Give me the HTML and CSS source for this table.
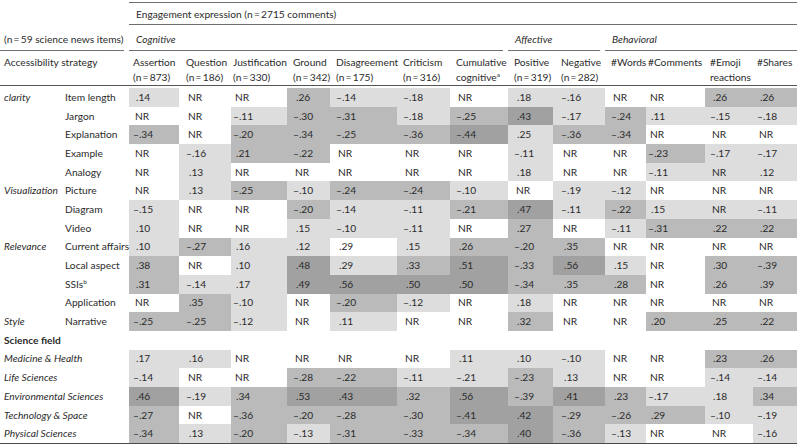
FILE: index.html
```html
<!DOCTYPE html>
<html lang="en">
<head>
<meta charset="utf-8">
<title>Engagement expression table</title>
<link rel="stylesheet" href="styles.css">
</head>
<body>
<table class="tbl">
  <colgroup>
    <col class="w61"><col class="w68">
    <col class="w50"><col class="w52"><col class="w56"><col class="w43"><col class="w67"><col class="w53"><col class="w58">
    <col class="w45"><col class="w52">
    <col class="w41"><col class="w59"><col class="w48"><col class="w44">
  </colgroup>
  <thead>
    <tr class="r1">
      <th colspan="2"></th>
      <th colspan="13" class="eng">Engagement expression (n&thinsp;=&thinsp;2715 comments)</th>
    </tr>
    <tr class="r2">
      <th colspan="2" class="grp"><div class="rule plain">(n&thinsp;=&thinsp;59 science news items)</div></th>
      <th colspan="7" class="grp"><div class="rule">Cognitive</div></th>
      <th colspan="2" class="grp"><div class="rule">Affective</div></th>
      <th colspan="4" class="grp"><div class="rule last">Behavioral</div></th>
    </tr>
    <tr class="r3">
      <th colspan="2" class="lead">Accessibility strategy</th>
      <th>Assertion<br>(n&thinsp;=&thinsp;873)</th>
      <th>Question<br>(n&thinsp;=&thinsp;186)</th>
      <th>Justification<br>(n&thinsp;=&thinsp;330)</th>
      <th>Ground<br>(n&thinsp;=&thinsp;342)</th>
      <th>Disagreement<br>(n&thinsp;=&thinsp;175)</th>
      <th>Criticism<br>(n&thinsp;=&thinsp;316)</th>
      <th>Cumulative<br>cognitive<sup>a</sup></th>
      <th>Positive<br>(n&thinsp;=&thinsp;319)</th>
      <th>Negative<br>(n&thinsp;=&thinsp;282)</th>
      <th>#Words</th>
      <th>#Comments</th>
      <th>#Emoji<br>reactions</th>
      <th>#Shares</th>
    </tr>
  </thead>
  <tbody>
    <tr class="sp"><td colspan="15"></td></tr>
    <tr class="row">
      <td class="cat">clarity</td><td class="lab">Item length</td>
      <td class="l p">.14</td><td class="nr">NR</td><td class="nr">NR</td><td class="m p">.26</td><td class="l">–.14</td><td class="l">–.18</td><td class="nr">NR</td>
      <td class="l p">.18</td><td class="l">–.16</td>
      <td class="nr">NR</td><td class="nr">NR</td><td class="m p">.26</td><td class="m p">.26</td>
    </tr>
    <tr class="row">
      <td class="cat"></td><td class="lab">Jargon</td>
      <td class="nr">NR</td><td class="nr">NR</td><td class="l">–.11</td><td class="m">–.30</td><td class="m">–.31</td><td class="l">–.18</td><td class="m">–.25</td>
      <td class="d p">.43</td><td class="l">–.17</td>
      <td class="m">–.24</td><td class="l p">.11</td><td class="l">–.15</td><td class="l">–.18</td>
    </tr>
    <tr class="row">
      <td class="cat"></td><td class="lab">Explanation</td>
      <td class="m">–.34</td><td class="nr">NR</td><td class="m">–.20</td><td class="m">–.34</td><td class="m">–.25</td><td class="m">–.36</td><td class="d">–.44</td>
      <td class="l p">.25</td><td class="m">–.36</td>
      <td class="m">–.34</td><td class="nr">NR</td><td class="nr">NR</td><td class="nr">NR</td>
    </tr>
    <tr class="row">
      <td class="cat"></td><td class="lab">Example</td>
      <td class="nr">NR</td><td class="l">–.16</td><td class="m p">.21</td><td class="m">–.22</td><td class="nr">NR</td><td class="nr">NR</td><td class="nr">NR</td>
      <td class="l">–.11</td><td class="nr">NR</td>
      <td class="nr">NR</td><td class="m">–.23</td><td class="l">–.17</td><td class="l">–.17</td>
    </tr>
    <tr class="row">
      <td class="cat"></td><td class="lab">Analogy</td>
      <td class="nr">NR</td><td class="l p">.13</td><td class="nr">NR</td><td class="nr">NR</td><td class="nr">NR</td><td class="nr">NR</td><td class="nr">NR</td>
      <td class="l p">.18</td><td class="nr">NR</td>
      <td class="nr">NR</td><td class="l">–.11</td><td class="l nr">NR</td><td class="l p">.12</td>
    </tr>
    <tr class="row">
      <td class="cat">Visualization</td><td class="lab">Picture</td>
      <td class="nr">NR</td><td class="l p">.13</td><td class="m">–.25</td><td class="l">–.10</td><td class="m">–.24</td><td class="m">–.24</td><td class="l">–.10</td>
      <td class="nr">NR</td><td class="l">–.19</td>
      <td class="l">–.12</td><td class="nr">NR</td><td class="nr">NR</td><td class="nr">NR</td>
    </tr>
    <tr class="row">
      <td class="cat"></td><td class="lab">Diagram</td>
      <td class="l">–.15</td><td class="nr">NR</td><td class="nr">NR</td><td class="m">–.20</td><td class="l">–.14</td><td class="l">–.11</td><td class="m">–.21</td>
      <td class="d p">.47</td><td class="l">–.11</td>
      <td class="m">–.22</td><td class="l p">.15</td><td class="l nr">NR</td><td class="l">–.11</td>
    </tr>
    <tr class="row">
      <td class="cat"></td><td class="lab">Video</td>
      <td class="l p">.10</td><td class="nr">NR</td><td class="nr">NR</td><td class="l p">.15</td><td class="l">–.10</td><td class="l">–.11</td><td class="nr">NR</td>
      <td class="m p">.27</td><td class="nr">NR</td>
      <td class="l">–.11</td><td class="m">–.31</td><td class="m p">.22</td><td class="m p">.22</td>
    </tr>
    <tr class="row">
      <td class="cat">Relevance</td><td class="lab">Current affairs</td>
      <td class="l p">.10</td><td class="m">–.27</td><td class="l p">.16</td><td class="l p">.12</td><td class="p">.29</td><td class="l p">.15</td><td class="m p">.26</td>
      <td class="m">–.20</td><td class="m p">.35</td>
      <td class="nr">NR</td><td class="nr">NR</td><td class="nr">NR</td><td class="nr">NR</td>
    </tr>
    <tr class="row">
      <td class="cat"></td><td class="lab">Local aspect</td>
      <td class="m p">.38</td><td class="nr">NR</td><td class="l p">.10</td><td class="d p">.48</td><td class="l p">.29</td><td class="m p">.33</td><td class="d p">.51</td>
      <td class="m">–.33</td><td class="d p">.56</td>
      <td class="l p">.15</td><td class="nr">NR</td><td class="m p">.30</td><td class="m">–.39</td>
    </tr>
    <tr class="row">
      <td class="cat"></td><td class="lab">SSIs<sup>b</sup></td>
      <td class="m p">.31</td><td class="l">–.14</td><td class="l p">.17</td><td class="d p">.49</td><td class="d p">.56</td><td class="d p">.50</td><td class="d p">.50</td>
      <td class="m">–.34</td><td class="m p">.35</td>
      <td class="m p">.28</td><td class="nr">NR</td><td class="m p">.26</td><td class="m p">.39</td>
    </tr>
    <tr class="row">
      <td class="cat"></td><td class="lab">Application</td>
      <td class="nr">NR</td><td class="m p">.35</td><td class="l">–.10</td><td class="nr">NR</td><td class="m">–.20</td><td class="l">–.12</td><td class="nr">NR</td>
      <td class="l p">.18</td><td class="nr">NR</td>
      <td class="nr">NR</td><td class="nr">NR</td><td class="nr">NR</td><td class="nr">NR</td>
    </tr>
    <tr class="row">
      <td class="cat">Style</td><td class="lab">Narrative</td>
      <td class="m">–.25</td><td class="m">–.25</td><td class="l">–.12</td><td class="nr">NR</td><td class="l p">.11</td><td class="nr">NR</td><td class="nr">NR</td>
      <td class="m p">.32</td><td class="nr">NR</td>
      <td class="nr">NR</td><td class="m p">.20</td><td class="m p">.25</td><td class="m p">.22</td>
    </tr>
    <tr class="row">
      <td colspan="15" class="section">Science field</td>
    </tr>
    <tr class="row">
      <td colspan="2" class="field">Medicine &amp; Health</td>
      <td class="l p">.17</td><td class="l p">.16</td><td class="nr">NR</td><td class="nr">NR</td><td class="nr">NR</td><td class="nr">NR</td><td class="l p">.11</td>
      <td class="l p">.10</td><td class="l">–.10</td>
      <td class="nr">NR</td><td class="nr">NR</td><td class="m p">.23</td><td class="m p">.26</td>
    </tr>
    <tr class="row">
      <td colspan="2" class="field">Life Sciences</td>
      <td class="l">–.14</td><td class="nr">NR</td><td class="nr">NR</td><td class="m">–.28</td><td class="m">–.22</td><td class="l">–.11</td><td class="l">–.21</td>
      <td class="m">–.23</td><td class="l p">.13</td>
      <td class="nr">NR</td><td class="nr">NR</td><td class="l">–.14</td><td class="l">–.14</td>
    </tr>
    <tr class="row">
      <td colspan="2" class="field">Environmental Sciences</td>
      <td class="d p">.46</td><td class="l">–.19</td><td class="m p">.34</td><td class="d p">.53</td><td class="d p">.43</td><td class="m p">.32</td><td class="d p">.56</td>
      <td class="m">–.39</td><td class="d p">.41</td>
      <td class="m p">.23</td><td class="l">–.17</td><td class="l p">.18</td><td class="m p">.34</td>
    </tr>
    <tr class="row">
      <td colspan="2" class="field">Technology &amp; Space</td>
      <td class="m">–.27</td><td class="nr">NR</td><td class="m">–.36</td><td class="m">–.20</td><td class="m">–.28</td><td class="m">–.30</td><td class="d">–.41</td>
      <td class="d p">.42</td><td class="m">–.29</td>
      <td class="m">–.26</td><td class="m p">.29</td><td class="l">–.10</td><td class="l">–.19</td>
    </tr>
    <tr class="row last">
      <td colspan="2" class="field">Physical Sciences</td>
      <td class="m">–.34</td><td class="l p">.13</td><td class="m">–.20</td><td class="l">–.13</td><td class="m">–.31</td><td class="m">–.33</td><td class="m">–.34</td>
      <td class="d p">.40</td><td class="m">–.36</td>
      <td class="l">–.13</td><td class="nr">NR</td><td class="nr">NR</td><td class="l">–.16</td>
    </tr>
  </tbody>
</table>
</body>
</html>
```

FILE: styles.css
```css
html, body {
  margin: 0;
  padding: 0;
  background: #ffffff;
}

body {
  font-family: Lato, "Open Sans", "DejaVu Sans", sans-serif;
  font-size: 10.2px;
  color: #2b2b2b;
}

.tbl {
  width: 797px;
  table-layout: fixed;
  border-collapse: separate;
  border-spacing: 0;
  margin-top: 2px;
}

.w61 { width: 61px; }
.w68 { width: 68px; }
.w50 { width: 50px; }
.w52 { width: 52px; }
.w56 { width: 56px; }
.w43 { width: 43px; }
.w67 { width: 67px; }
.w53 { width: 53px; }
.w58 { width: 58px; }
.w45 { width: 45px; }
.w41 { width: 41px; }
.w59 { width: 59px; }
.w48 { width: 48px; }
.w44 { width: 44px; }

th, td {
  padding: 0;
  font-weight: normal;
  text-align: left;
  white-space: nowrap;
  overflow: visible;
}

sup {
  font-size: 6.5px;
  line-height: 0;
  vertical-align: 4px;
}

/* header row 1 */
.r1 .eng {
  border-top: 1px solid #6f6f6f;
  border-bottom: 1px solid #6f6f6f;
  padding: 4px 0 2px 7px;
  line-height: 15px;
}

/* header row 2: group labels with short rules */
.grp {
  vertical-align: bottom;
}

.rule {
  padding: 7px 0 4px 7px;
  line-height: 14px;
  border-bottom: 1px solid #6f6f6f;
  margin-right: 5px;
  font-style: italic;
}

.rule.plain {
  font-style: normal;
  padding-left: 4px;
}

.rule.last {
  margin-right: 0;
}

/* header row 3 */
.r3 th {
  vertical-align: top;
  line-height: 15px;
  padding-top: 4px;
  border-bottom: 1px solid #555555;
}

.r3 th.lead {
  padding-left: 4px;
}

/* per-column text offsets */
.r3 > :nth-last-child(13), .row > :nth-last-child(13) { --pl: 4px; }
.r3 > :nth-last-child(12), .row > :nth-last-child(12) { --pl: 7px; }
.r3 > :nth-last-child(11), .row > :nth-last-child(11) { --pl: 2px; }
.r3 > :nth-last-child(10), .row > :nth-last-child(10) { --pl: 6px; }
.r3 > :nth-last-child(9),  .row > :nth-last-child(9)  { --pl: 6px; }
.r3 > :nth-last-child(8),  .row > :nth-last-child(8)  { --pl: 6px; }
.r3 > :nth-last-child(7),  .row > :nth-last-child(7)  { --pl: 6px; }
.r3 > :nth-last-child(6),  .row > :nth-last-child(6)  { --pl: 6px; }
.r3 > :nth-last-child(5),  .row > :nth-last-child(5)  { --pl: 8px; }
.r3 > :nth-last-child(4),  .row > :nth-last-child(4)  { --pl: 6px; }
.r3 > :nth-last-child(3),  .row > :nth-last-child(3)  { --pl: 2px; }
.r3 > :nth-last-child(2),  .row > :nth-last-child(2)  { --pl: 5px; }
.r3 > :nth-last-child(1),  .row > :nth-last-child(1)  { --pl: 4px; }

.r3 th:not(.lead) {
  padding-left: var(--pl);
}

/* spacer under header rule */
.sp td {
  height: 2px;
  padding: 0;
}

/* body rows */
.row td {
  height: 18.7px;
  line-height: 13px;
  vertical-align: middle;
  padding-left: calc(var(--pl, 4px) + var(--off, 0px));
}

.row td.p { --off: 3px; }
.row td.nr { --off: 2px; }

.row td.cat {
  font-style: italic;
  padding-left: 4px;
}

.row td.lab {
  padding-left: 4px;
}

.row td.field {
  font-style: italic;
  padding-left: 4px;
}

.row td.section {
  font-weight: bold;
  padding-left: 4px;
}

.row.last td {
  border-bottom: 1px solid #4a4a4a;
}

/* shading levels */
.l { background: #dddddd; }
.m { background: #bababa; }
.d { background: #a1a1a1; }
```
